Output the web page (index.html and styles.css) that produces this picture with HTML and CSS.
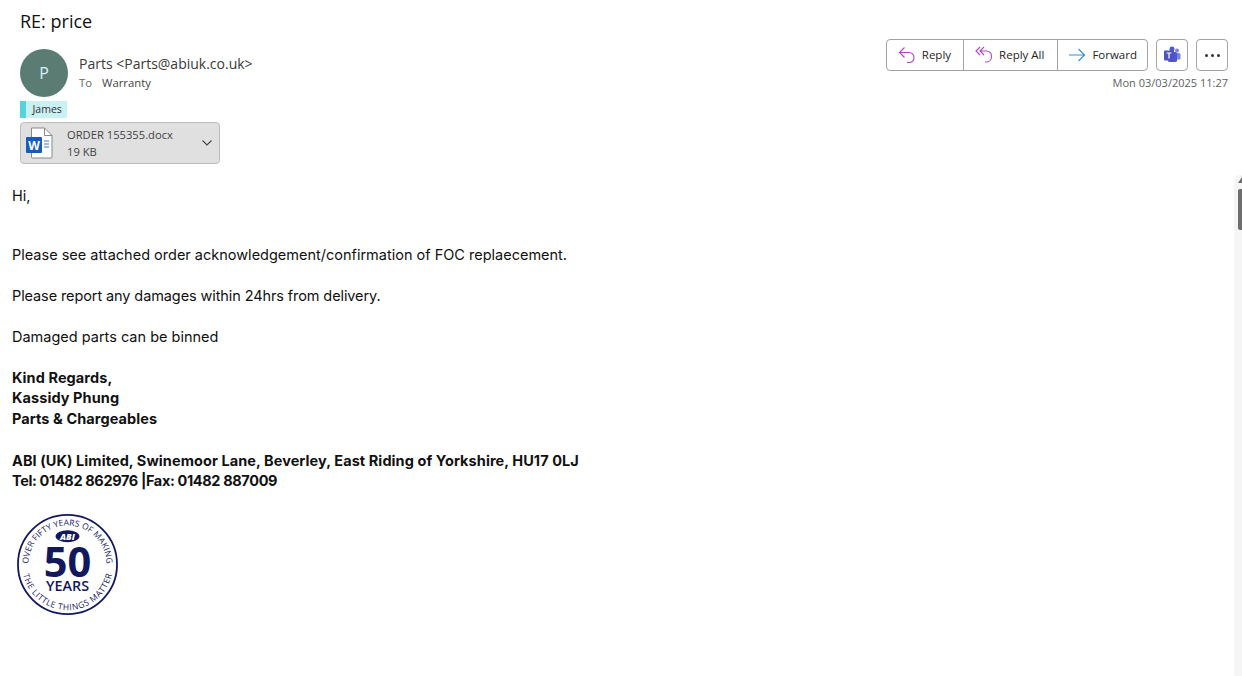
FILE: index.html
```html
<!DOCTYPE html>
<html lang="en">
<head>
    <meta charset="UTF-8">
    <title>RE: price</title>
    <link rel="stylesheet" href="styles.css">
</head>
<body>
    <header class="mail-header">
        <h1 class="subject">RE: price</h1>
        <div class="sender-row">
            <div class="avatar">P</div>
            <div class="sender-info">
                <div class="sender-name">Parts &lt;Parts@abiuk.co.uk&gt;</div>
                <div class="recipients"><span class="to-label">To</span><span>Warranty</span></div>
            </div>
            <div class="actions">
                <div class="action-buttons">
                    <div class="button-group">
                        <div class="action-btn">
                            <svg class="action-icon" viewBox="0 0 18 18" fill="none" stroke="#b146c2" stroke-width="1.1">
                                <path d="M6.5 1.5 1.5 6.5l5 5M1.5 6.5h9.5a5 5 0 0 1 5 5c0 2.800-2 5-5 5H9"/>
                            </svg>
                            <span>Reply</span>
                        </div>
                        <div class="action-btn reply-all-btn">
                            <svg class="action-icon" viewBox="0 0 18 18" fill="none" stroke="#b146c2" stroke-width="1.1">
                                <path d="M5 1 1 5l4 4M9 1 5 5l4 4M5 5h6.5a5 5 0 0 1 5 5.500c0 3-2 5.500-5 5.500H10"/>
                            </svg>
                            <span>Reply All</span>
                        </div>
                        <div class="action-btn forward-btn">
                            <svg class="action-icon" viewBox="0 0 18 18" fill="none" stroke="#2b8fd6" stroke-width="1.1">
                                <path d="M1 9h15.5M10.5 3l6 6-6 6"/>
                            </svg>
                            <span>Forward</span>
                        </div>
                    </div>
                    <div class="icon-btn">
                        <svg width="18" height="18" viewBox="0 0 18 18">
                            <circle cx="14" cy="4.5" r="2" fill="#7b83eb"/>
                            <rect x="11" y="7" width="6.5" height="6.5" rx="1.5" fill="#7b83eb"/>
                            <circle cx="9" cy="3" r="2.5" fill="#5059c9"/>
                            <rect x="5" y="6" width="9" height="10" rx="1.5" fill="#5059c9"/>
                            <rect x="1" y="4.5" width="10" height="10" rx="1" fill="#4b53bc"/>
                            <path d="M3.5 7h5M6 7v5.5" stroke="#fff" stroke-width="1.2" fill="none"/>
                        </svg>
                    </div>
                    <div class="icon-btn more-btn"><i></i><i></i><i></i></div>
                </div>
                <div class="sent-date">Mon 03/03/2025 11:27</div>
            </div>
        </div>
        <div class="category"><span>James</span></div>
        <div class="attachment">
            <svg class="file-icon" width="28" height="32" viewBox="0 0 28 32">
                <path d="M5.5 1h13l7.5 7.5V30a1 1 0 0 1-1 1H6.5a1 1 0 0 1-1-1z" fill="#fff" stroke="#8a8a8a"/>
                <path d="M18.5 1v7.5H26" fill="none" stroke="#8a8a8a"/>
                <path d="M18 14h5M18 17h5M18 20h5" stroke="#3a78c9"/>
                <rect x="0" y="10" width="16" height="16" rx="1" fill="#185abd"/>
                <text class="word-letter" x="8" y="22.5" text-anchor="middle">W</text>
            </svg>
            <div class="file-info">
                <div class="file-name">ORDER 155355.docx</div>
                <div class="file-size">19 KB</div>
            </div>
            <svg class="chevron" width="10" height="6" viewBox="0 0 10 6" fill="none" stroke="#444" stroke-width="1.1">
                <path d="M.5.5 5 5 9.500.5"/>
            </svg>
        </div>
    </header>

    <div class="mail-main">
        <main class="mail-body">
            <p class="gap-2">Hi,</p>
            <p class="gap-1">Please see attached order acknowledgement/confirmation of FOC replaecement.</p>
            <p class="gap-1 tight">Please report any damages within 24hrs from delivery.</p>
            <p class="gap-1">Damaged parts can be binned</p>
            <p class="gap-1 bold">Kind Regards,<br>Kassidy Phung<br>Parts &amp; Chargeables</p>
            <p class="gap-1 bold">ABI (UK) Limited, Swinemoor Lane, Beverley, East Riding of Yorkshire, HU17 0LJ<br><span class="tel">Tel: 01482 862976 |Fax: 01482 887009</span></p>
            <svg class="logo" width="103" height="103" viewBox="0 0 104 104">
                <defs>
                    <path id="arcTop" d="M13.8 62.2A39.5 39.5 0 1 1 90.2 62.2"/>
                    <path id="arcBottom" d="M6.7 60A46 46 0 0 0 97.3 60"/>
                </defs>
                <circle cx="52" cy="52" r="50" fill="#fff" stroke="#12175e" stroke-width="1.8"/>
                <text class="logo-ring"><textPath href="#arcTop" startOffset="50%" text-anchor="middle" textLength="122">OVER FIFTY YEARS OF MAKING</textPath></text>
                <text class="logo-ring"><textPath href="#arcBottom" startOffset="50%" text-anchor="middle" textLength="124">THE LITTLE THINGS MATTER</textPath></text>
                <ellipse cx="52" cy="23.5" rx="12" ry="6" fill="#12175e"/>
                <text class="logo-abi" x="52" y="27" text-anchor="middle">ABI</text>
                <text class="logo-fifty" x="52" y="65" text-anchor="middle">50</text>
                <text class="logo-years" x="52" y="79" text-anchor="middle">YEARS</text>
            </svg>
        </main>
        <div class="scrollbar">
            <div class="scroll-arrow"></div>
            <div class="scroll-thumb"></div>
        </div>
    </div>
</body>
</html>
```

FILE: styles.css
```css
* {
    margin: 0;
    padding: 0;
    box-sizing: border-box;
}

body {
    font-family: 'Open Sans', 'Noto Sans', sans-serif;
    background-color: #ffffff;
    color: #242424;
    height: 676px;
    overflow: hidden;
}

.mail-header {
    padding: 9px 14px 0 20px;
    height: 175px;
}

.subject {
    font-size: 18px;
    font-weight: 400;
    line-height: 24px;
    color: #111;
    margin-bottom: 16px;
}

.sender-row {
    display: flex;
    align-items: flex-start;
}

.avatar {
    width: 48px;
    height: 48px;
    border-radius: 50%;
    background-color: #5a7c72;
    color: #d8efff;
    font-size: 16px;
    display: flex;
    align-items: center;
    justify-content: center;
    flex-shrink: 0;
}

.sender-info {
    margin-left: 11px;
    padding-top: 5px;
    flex: 1;
}

.sender-name {
    font-size: 14px;
    line-height: 20px;
    color: #3b3a39;
}

.recipients {
    display: flex;
    gap: 10px;
    font-size: 11.3px;
    line-height: 18px;
    color: #424242;
}

.to-label {
    color: #666;
}

.actions {
    display: flex;
    flex-direction: column;
    align-items: flex-end;
    margin-top: -10px;
}

.action-buttons {
    display: flex;
    gap: 8px;
}

.button-group {
    display: flex;
    height: 32px;
    border: 1px solid #a3a3a3;
    border-radius: 4px;
}

.action-btn {
    display: flex;
    align-items: center;
    gap: 6px;
    padding: 0 12px 2px 11px;
    font-size: 11.5px;
    color: #242424;
    border-left: 1px solid #a3a3a3;
}

.action-btn:first-child {
    border-left: none;
}

.reply-all-btn {
    padding-right: 13px;
}

.forward-btn {
    padding: 0 10px 2px;
}

.action-icon {
    width: 18px;
    height: 18px;
    margin-top: 2px;
}

.icon-btn {
    width: 32px;
    height: 32px;
    border: 1px solid #a3a3a3;
    border-radius: 4px;
    display: flex;
    align-items: center;
    justify-content: center;
}

.more-btn {
    gap: 3px;
}

.more-btn i {
    width: 3px;
    height: 3px;
    border-radius: 50%;
    background-color: #333;
}

.sent-date {
    font-size: 11px;
    line-height: 16px;
    color: #616161;
    margin-top: 4px;
}

.category {
    display: flex;
    margin-top: 4px;
}

.category span {
    width: 47px;
    height: 17px;
    border-left: 6px solid #58d3db;
    background-color: #c9f0f3;
    font-size: 10.5px;
    line-height: 17px;
    padding-left: 6.5px;
    color: #333;
}

.attachment {
    width: 200px;
    height: 42px;
    margin-top: 4px;
    display: flex;
    align-items: center;
    background-color: #e0e0e0;
    border: 1px solid #bdbdbd;
    border-radius: 4px;
    padding-left: 5px;
}

.word-letter {
    font-family: 'Open Sans', sans-serif;
    font-size: 12px;
    font-weight: 700;
    fill: #fff;
}

.file-info {
    margin-left: 13px;
    flex: 1;
    font-size: 11.2px;
    line-height: 17px;
    color: #424242;
}

.chevron {
    margin-right: 7px;
}

.mail-main {
    display: flex;
    height: 501px;
}

.mail-body {
    flex: 1;
    padding: 11px 0 0 12px;
    font-family: Inter, 'Liberation Sans', sans-serif;
    font-size: 14.5px;
    line-height: 20.5px;
    color: #111;
}

.gap-1 {
    margin-bottom: 20.5px;
}

.gap-2 {
    margin-bottom: 38.4px;
}

.tight {
    letter-spacing: -0.1px;
}

.bold {
    font-weight: 700;
    letter-spacing: 0.08px;
    margin-bottom: 21.2px;
}

.tel {
    letter-spacing: -0.36px;
}

.logo {
    display: block;
    margin: 2px 0 0 4px;
}

.logo-ring {
    font-family: 'Open Sans', sans-serif;
    font-size: 8.5px;
    fill: #12175e;
}

.logo-abi {
    font-family: 'Open Sans', sans-serif;
    font-size: 9px;
    font-weight: 800;
    font-style: italic;
    fill: #fff;
}

.logo-fifty {
    font-family: 'Open Sans', sans-serif;
    font-size: 42px;
    font-weight: 700;
    fill: #12175e;
}

.logo-years {
    font-family: 'Open Sans', sans-serif;
    font-size: 14.5px;
    font-weight: 600;
    fill: #12175e;
}

.scrollbar {
    width: 8px;
    background-color: #f5f5f5;
    border-radius: 6px 0 0 0;
    padding: 2px 0 0 4px;
}

.scroll-arrow {
    width: 0;
    height: 0;
    border-left: 4px solid transparent;
    border-bottom: 6px solid #6e6e6e;
}

.scroll-thumb {
    width: 4px;
    height: 41px;
    margin-top: 6px;
    background-color: #6e6e6e;
    border-radius: 2px 0 0 2px;
}
```
